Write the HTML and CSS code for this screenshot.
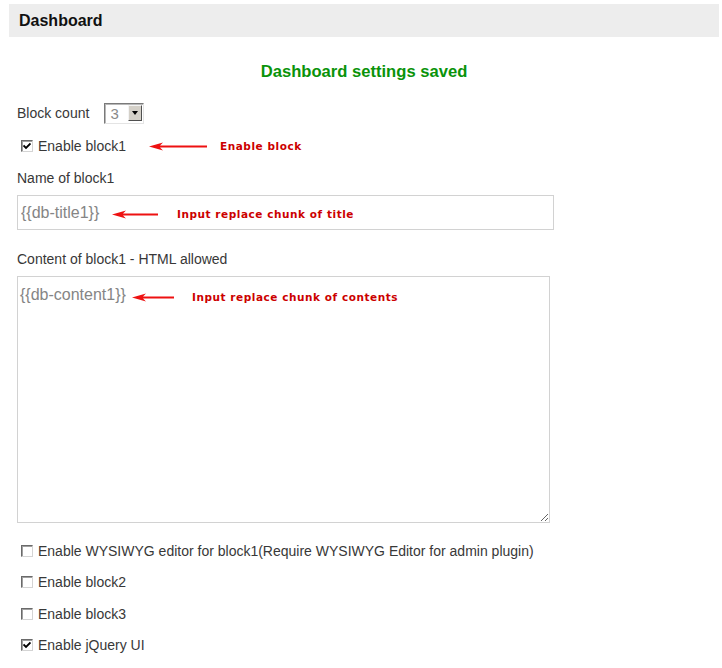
FILE: index.html
```html
<!DOCTYPE html>
<html lang="en">
<head>
    <meta charset="UTF-8">
    <title>Dashboard</title>
    <link rel="stylesheet" href="styles.css">
</head>
<body>

    <div class="panel">
        <h2 class="panel-title">Dashboard</h2>

        <div class="panel-body">
            <p class="notice">Dashboard settings saved</p>

            <div class="row">
                <span class="label">Block count</span>
                <div class="select">
                    <span class="select-value">3</span>
                    <span class="select-btn"><span class="caret"></span></span>
                </div>
            </div>

            <div class="check-row first">
                <span class="box checked">
                    <svg viewBox="0 0 8 8" width="8" height="8"><path d="M0.5 3.5 L3 6 L7.5 1.5" fill="none" stroke="#000" stroke-width="1.8"/></svg>
                </span>
                <span class="label">Enable block1</span>
                <span class="note note-inline">
                    <svg class="arrow" viewBox="0 0 58 9" width="58" height="9"><path d="M0 4.5 L14 0.5 L11 3.6 L58 3.6 L58 5.4 L11 5.4 L14 8.5 Z"/></svg>
                    <span class="note-text">Enable block</span>
                </span>
            </div>

            <div class="field">
                <span class="label">Name of block1</span>
                <div class="control">
                    <input class="text-input" type="text" placeholder="{{db-title1}}">
                    <span class="note note-title">
                        <svg class="arrow" viewBox="0 0 46 9" width="46" height="9"><path d="M0 4.5 L14 0.5 L11 3.6 L46 3.6 L46 5.4 L11 5.4 L14 8.5 Z"/></svg>
                        <span class="note-text">Input replace chunk of title</span>
                    </span>
                </div>
            </div>

            <div class="field field-content">
                <span class="label">Content of block1 - HTML allowed</span>
                <div class="control">
                    <textarea class="text-area" placeholder="{{db-content1}}"></textarea>
                    <span class="note note-content">
                        <svg class="arrow" viewBox="0 0 42 9" width="42" height="9"><path d="M0 4.5 L14 0.5 L11 3.6 L42 3.6 L42 5.4 L11 5.4 L14 8.5 Z"/></svg>
                        <span class="note-text">Input replace chunk of contents</span>
                    </span>
                </div>
            </div>

            <div class="options">
                <div class="check-row">
                    <span class="box"></span>
                    <span class="label">Enable WYSIWYG editor for block1(Require WYSIWYG Editor for admin plugin)</span>
                </div>
                <div class="check-row">
                    <span class="box"></span>
                    <span class="label">Enable block2</span>
                </div>
                <div class="check-row">
                    <span class="box"></span>
                    <span class="label">Enable block3</span>
                </div>
                <div class="check-row">
                    <span class="box checked">
                        <svg viewBox="0 0 8 8" width="8" height="8"><path d="M0.5 3.5 L3 6 L7.5 1.5" fill="none" stroke="#000" stroke-width="1.8"/></svg>
                    </span>
                    <span class="label">Enable jQuery UI</span>
                </div>
            </div>
        </div>
    </div>

</body>
</html>
```

FILE: styles.css
```css
body {
    margin: 0;
    padding: 4px 3px 0 9px;
    background-color: #ffffff;
    font-family: 'Liberation Sans', Arial, sans-serif;
    font-size: 14px;
    color: #383838;
}

.panel-title {
    margin: 0;
    height: 33px;
    line-height: 33px;
    padding-left: 10px;
    background-color: #ededed;
    font-size: 16px;
    font-weight: bold;
    color: #111111;
}

.panel-body {
    padding-left: 8px;
}

.notice {
    margin: 25px 0 0 -8px;
    height: 20px;
    line-height: 20px;
    text-align: center;
    font-size: 16.6px;
    font-weight: bold;
    color: #0a930a;
}

.row {
    display: flex;
    align-items: center;
    margin-top: 20px;
    height: 22px;
}

.label {
    line-height: 20px;
    white-space: nowrap;
}

/* old style drop-down */
.select {
    display: flex;
    align-items: center;
    margin-left: 15px;
    width: 38px;
    height: 19px;
    border: 1px solid;
    border-color: #7a7a7a #e4e4e4 #e4e4e4 #7a7a7a;
    background-color: #ffffff;
    box-shadow: inset 1px 1px 0 #b8b8b8;
}

.select-value {
    flex: 1;
    padding-left: 5px;
    color: #8a8a8a;
    font-size: 15px;
    line-height: 19px;
}

.select-btn {
    display: flex;
    justify-content: center;
    align-items: center;
    width: 14px;
    height: 16px;
    margin-right: 1px;
    background-color: #d4d0c8;
    border: 1px solid;
    border-color: #f4f4f4 #505050 #505050 #f4f4f4;
    box-sizing: border-box;
}

.caret {
    width: 0;
    height: 0;
    border-left: 3.5px solid transparent;
    border-right: 3.5px solid transparent;
    border-top: 4px solid #000000;
}

/* checkboxes */
.check-row {
    display: flex;
    align-items: center;
    height: 20px;
}

.check-row.first {
    margin-top: 12px;
}

.box {
    display: flex;
    justify-content: center;
    align-items: center;
    width: 12px;
    height: 12px;
    margin: 0 5px 0 4px;
    box-sizing: border-box;
    border: 1px solid;
    border-color: #6a6a6a #d4d4d4 #d4d4d4 #6a6a6a;
    box-shadow: inset 1px 1px 0 #a0a0a0;
    background-color: #ffffff;
}

.options {
    display: flex;
    flex-direction: column;
    gap: 11.33px;
    margin-top: 18px;
}

/* text fields */
.field {
    margin-top: 12px;
}

.field-content {
    margin-top: 19px;
}

.control {
    position: relative;
    margin-top: 7px;
}

.text-input,
.text-area {
    display: block;
    box-sizing: border-box;
    border: 1px solid #d2d2d2;
    font-family: 'Liberation Sans', Arial, sans-serif;
    font-size: 16px;
    color: #333333;
    outline: none;
}

.text-input {
    width: 537px;
    height: 35px;
    padding: 0 3px;
}

.text-area {
    width: 533px;
    height: 247px;
    padding: 9px 2px;
    resize: both;
}

.text-input::placeholder,
.text-area::placeholder {
    color: #858585;
}

/* red annotations */
.note {
    display: flex;
    align-items: center;
    gap: 13px;
}

.note-inline {
    margin-left: 23px;
}

.note-title {
    position: absolute;
    top: 13px;
    left: 95px;
    gap: 19px;
}

.note-content {
    position: absolute;
    top: 15px;
    left: 115px;
    gap: 18px;
}

.arrow {
    fill: #ee1111;
}

.note-text {
    font-family: 'DejaVu Sans', Verdana, sans-serif;
    font-size: 10.5px;
    font-weight: bold;
    letter-spacing: 0.55px;
    color: #cc0000;
    white-space: nowrap;
}
```
